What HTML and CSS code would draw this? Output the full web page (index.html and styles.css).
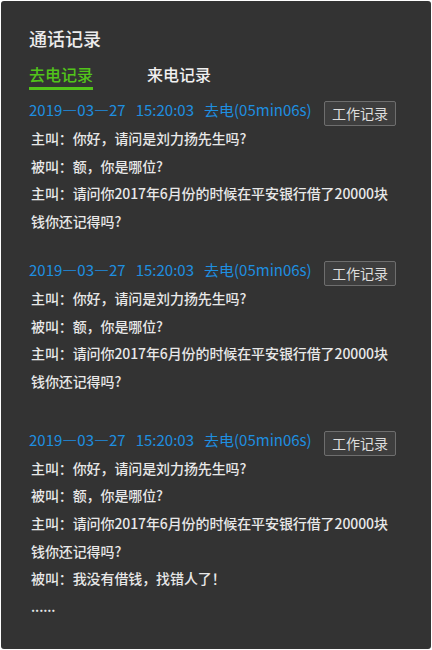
FILE: index.html
```html
<!DOCTYPE html>
<html lang="zh-CN">
<head>
<meta charset="utf-8">
<title>通话记录</title>
<link rel="stylesheet" href="styles.css">
</head>
<body>
<div class="panel">
  <h1 class="title">通话记录</h1>
  <div class="tabs">
    <span class="tab tab-active">去电记录</span>
    <span class="tab">来电记录</span>
  </div>

  <section class="record">
    <div class="record-head">
      <span class="record-meta">2019—03—27&nbsp;&nbsp;&nbsp;15:20:03&nbsp;&nbsp;&nbsp;去电(05min06s)</span>
      <button class="work-btn">工作记录</button>
    </div>
    <p class="line">主叫：你好，请问是刘力扬先生吗?</p>
    <p class="line">被叫：额，你是哪位?</p>
    <p class="line">主叫：请问你2017年6月份的时候在平安银行借了20000块</p>
    <p class="line">钱你还记得吗?</p>
  </section>

  <section class="record record-second">
    <div class="record-head">
      <span class="record-meta">2019—03—27&nbsp;&nbsp;&nbsp;15:20:03&nbsp;&nbsp;&nbsp;去电(05min06s)</span>
      <button class="work-btn">工作记录</button>
    </div>
    <p class="line">主叫：你好，请问是刘力扬先生吗?</p>
    <p class="line">被叫：额，你是哪位?</p>
    <p class="line">主叫：请问你2017年6月份的时候在平安银行借了20000块</p>
    <p class="line">钱你还记得吗?</p>
  </section>

  <section class="record record-third">
    <div class="record-head">
      <span class="record-meta">2019—03—27&nbsp;&nbsp;&nbsp;15:20:03&nbsp;&nbsp;&nbsp;去电(05min06s)</span>
      <button class="work-btn">工作记录</button>
    </div>
    <p class="line">主叫：你好，请问是刘力扬先生吗?</p>
    <p class="line">被叫：额，你是哪位?</p>
    <p class="line">主叫：请问你2017年6月份的时候在平安银行借了20000块</p>
    <p class="line">钱你还记得吗?</p>
    <p class="line">被叫：我没有借钱，找错人了！</p>
    <p class="line">......</p>
  </section>
</div>
</body>
</html>
```

FILE: styles.css
```css
html, body {
  margin: 0;
  padding: 0;
  background: #ffffff;
}

body {
  font-family: "Noto Sans CJK SC", "Noto Sans", sans-serif;
  color: #e6e6e6;
}

.panel {
  box-sizing: border-box;
  margin: 1px;
  min-height: calc(100vh - 2px);
  background: #333333;
  border-radius: 3px;
  padding: 25px 35px 20px 28px;
}

.title {
  margin: 0;
  font-size: 18px;
  line-height: 24px;
  font-weight: 500;
  color: #ececec;
}

.tabs {
  display: flex;
  gap: 54px;
  margin-top: 12px;
}

.tab {
  font-size: 16px;
  line-height: 24px;
  font-weight: 500;
  padding-bottom: 1px;
  border-bottom: 3px solid transparent;
  color: #f0f0f0;
}

.tab-active {
  color: #52c41a;
  border-bottom-color: #52c41a;
}

.record {
  margin-top: 6px;
}

.record-second {
  margin-top: 20px;
}

.record-third {
  margin-top: 30px;
}

.record-head {
  display: flex;
  justify-content: space-between;
  align-items: flex-start;
  height: 28px;
}

.record-meta {
  font-size: 15px;
  line-height: 28px;
  color: #1e8fe0;
}

.work-btn {
  margin-top: 5px;
  height: 25px;
  box-sizing: border-box;
  padding: 0 7px;
  background: #3e3e3e;
  border: 1px solid #6e6e6e;
  border-radius: 2px;
  color: #dddddd;
  font-family: "Noto Sans CJK SC", "Noto Sans", sans-serif;
  font-size: 14px;
  line-height: 23px;
}

.line {
  margin: 0;
  padding-left: 2px;
  font-size: 14px;
  line-height: 27.7px;
  font-weight: 500;
  letter-spacing: -0.1px;
  color: #e8e8e8;
}

.record-head + .line {
  margin-top: 1px;
}
```
